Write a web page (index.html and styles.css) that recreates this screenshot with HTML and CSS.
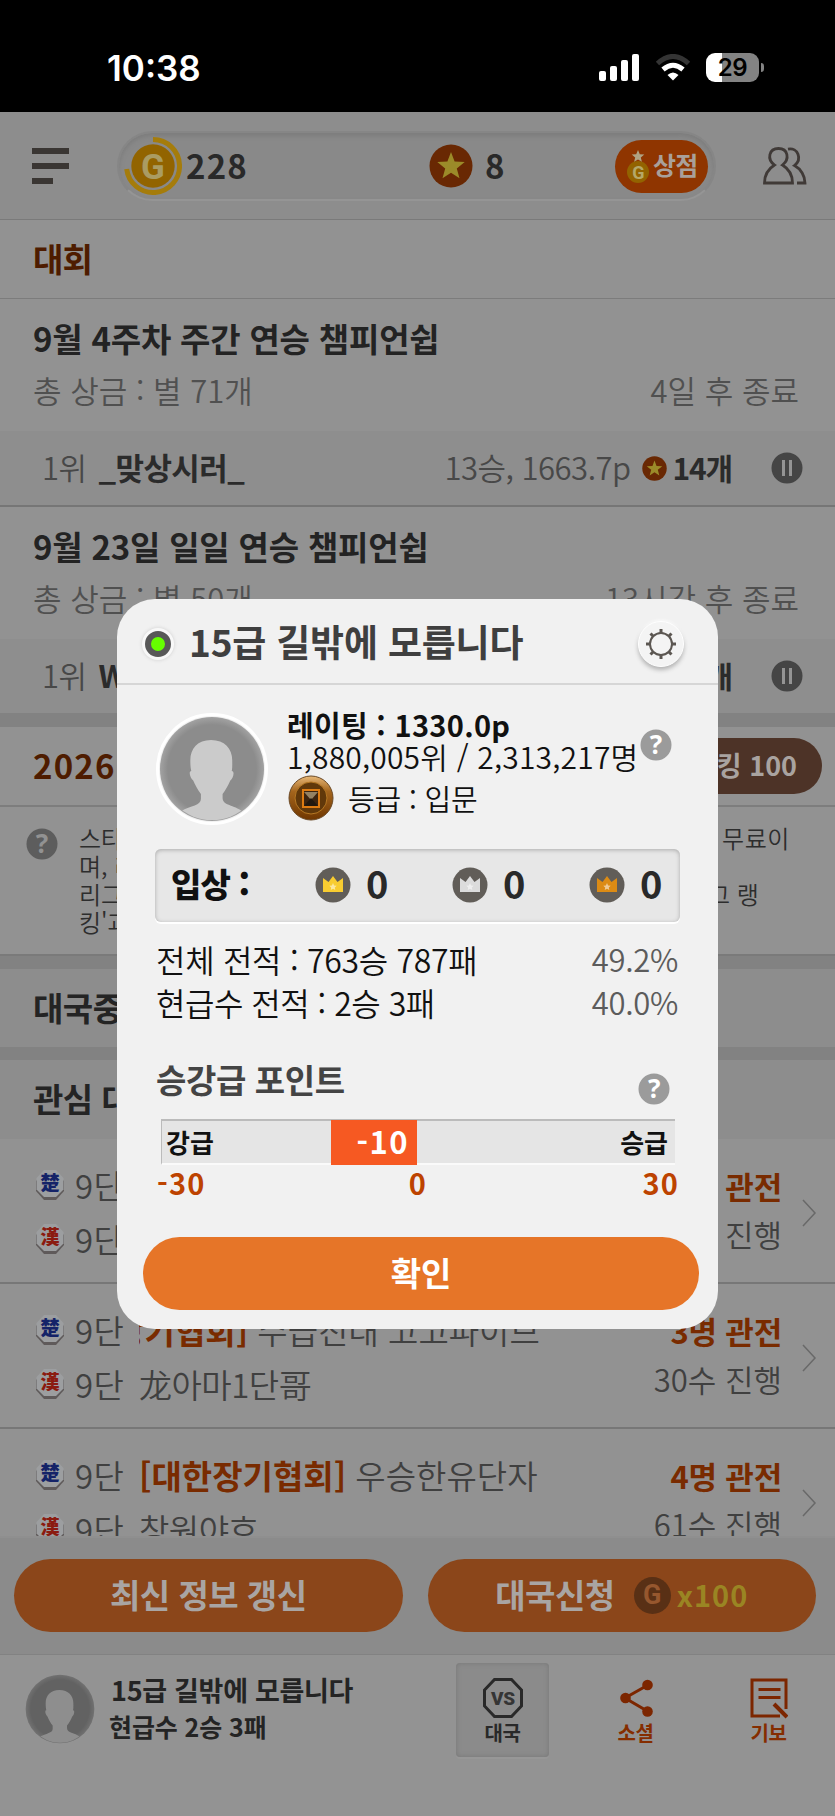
FILE: index.html
```html
<!DOCTYPE html>
<html lang="ko">
<head>
<meta charset="utf-8">
<title>장기</title>
<link rel="stylesheet" href="styles.css">
</head>
<body>
<svg class="defs" width="0" height="0" aria-hidden="true">
  <defs>
    <radialGradient id="avatarBg"><stop offset=".85" stop-color="#8c8c8c"/><stop offset="1" stop-color="#a2a2a2"/></radialGradient>
    <clipPath id="avatarClip"><circle cx="55" cy="55" r="53"/></clipPath>
    <linearGradient id="bronze" x1="0" y1="0" x2="0" y2="1"><stop offset="0" stop-color="#e8b877"/><stop offset=".35" stop-color="#a4651d"/><stop offset="1" stop-color="#6f3600"/></linearGradient>
    <symbol id="avatar" viewBox="0 0 110 110">
      <circle cx="55" cy="55" r="54" fill="url(#avatarBg)"/>
      <path clip-path="url(#avatarClip)" fill="#cbcbcb" d="M54 25c-14 0-21.500 9-21.500 21 0 5 .3 8 1 11-3 0-1.500 7 2 10 2 5 5 10 8 14v5c0 7-10 7-21 13v11h64V99C78 92 66 93 66 85v-4c3-4 6-9 8-14 3-2 5-10 1.500-10 .7-3 .5-7 .5-11 0-12-8-21-22-21z"/>
    </symbol>
    <symbol id="star" viewBox="0 0 44 44">
      <circle cx="22" cy="22" r="21.500" fill="#692803"/>
      <path fill="#9b8b29" d="M22 8l3.600 9.600 10.100.5-7.900 6.300 2.700 9.900-8.500-5.600-8.500 5.600 2.700-9.900-7.900-6.300 10.100-.5z"/>
    </symbol>
    <symbol id="pause" viewBox="0 0 32 32">
      <circle cx="16" cy="16" r="15.500" fill="#454545"/><path d="M12.500 8v16M19.500 8v16" stroke="#949494" stroke-width="3"/>
    </symbol>
    <symbol id="piece" viewBox="0 0 28 32">
      <path fill="#5f5a5a" d="M8 5h12l8 7v10l-8 9H8l-8-9V12z"/><path fill="#9c9ea0" d="M8 1h12l7.500 8v11.500L20 28H8L.5 20.500V9z"/>
    </symbol>
    <symbol id="crown" viewBox="0 0 36 36">
      <circle cx="18" cy="18" r="17.500" fill="#615d58"/>
      <path fill="currentColor" d="M8 11l5.500 4L18 9l4.500 6 5.500-4v14H8z"/><path fill="#fff" opacity=".55" d="M18 16l1.100 2.400 2.600.3-1.900 1.800.5 2.600-2.300-1.300-2.300 1.300.5-2.600-1.900-1.800 2.600-.3z"/>
    </symbol>
    <symbol id="chevron" viewBox="0 0 16 30"><path d="M2 2l12 13L2 28" fill="none" stroke="#696969" stroke-width="1.500"/></symbol>
  </defs>
</svg>

<div class="screen">
  <div class="status">
    <span class="clock">10:38</span>
    <div class="status-icons">
      <svg width="41" height="27" viewBox="0 0 41 27" fill="#fff"><rect x="0" y="17" width="7" height="10" rx="2"/><rect x="11" y="12" width="7" height="15" rx="2"/><rect x="22" y="6" width="7" height="21" rx="2"/><rect x="33" y="0" width="7" height="27" rx="2"/></svg>
      <svg width="36" height="27" viewBox="0 0 36 27" fill="none" stroke-width="5"><path d="M2.500 9.500Q18-4.500 33.500 9.500" stroke="#343434"/><path d="M8 15.500Q18 7 28 15.500" stroke="#fff"/><path d="M18 26.500l-5.500-5.500q5.500-5 11 0z" fill="#fff" stroke="none"/></svg>
      <span class="battery"><b>29</b></span>
    </div>
  </div>

  <div class="topbar">
    <svg width="38" height="36" viewBox="0 0 38 36" fill="#3a3633"><path d="M0 0h37v6H0zM0 15h37v6H0zM0 30h21v6H0z"/></svg>
    <div class="wallet">
      <svg class="coin" width="58" height="60" viewBox="0 0 58 60"><circle cx="29" cy="30" r="21.700" fill="#926400"/><path d="M29 3.500a26.500 26.500 0 1 1-26.300 29.500" fill="none" stroke="#a57c0b" stroke-width="5"/><text x="29" y="42.500" class="coin-letter">G</text></svg>
      <span class="gold">228</span>
      <svg class="wallet-star" width="44" height="44"><use href="#star"/></svg>
      <span class="stars">8</span>
      <div class="shop"><svg width="24" height="34" viewBox="0 0 24 34"><circle cx="12" cy="23" r="11" fill="#936300"/><text x="12" y="29.500" class="shop-letter">G</text><path fill="#b0a383" d="M12 1l1.800 4.200 4.500.3-3.500 2.900 1.100 4.400-3.900-2.400-3.900 2.400 1.100-4.400-3.500-2.900 4.500-.3z"/></svg><span>상점</span></div>
    </div>
    <svg class="friends" width="44" height="38" viewBox="0 0 44 38" fill="none" stroke="#403a37" stroke-width="2.800"><path d="M11.500 18C3.500 12 6 1.500 15.500 1.500S27 12 19.500 18C26 22 29.500 29 29.500 36H1.500c0-7 3.500-14 10-18z"/><path d="M25 2.200c10-2 14.500 10 6.500 16.300C38 22 42 29 42 36h-8"/></svg>
  </div>

  <div class="feed">
    <div class="heading"><span class="accent">대회</span></div>
    <div class="event">
      <div class="event-title">9월 4주차 주간 연승 챔피언쉽</div>
      <div class="event-meta"><span>총 상금 : 별 71개</span><span>4일 후 종료</span></div>
    </div>
    <div class="leader"><span class="rank">1위</span><b>_맞상시러_</b><span class="score">13승, 1663.7p</span><svg width="25" height="25"><use href="#star"/></svg><b class="prize">14개</b><svg width="32" height="32"><use href="#pause"/></svg></div>
    <div class="event second">
      <div class="event-title">9월 23일 일일 연승 챔피언쉽</div>
      <div class="event-meta"><span>총 상금 : 별 50개</span><span>13시간 후 종료</span></div>
    </div>
    <div class="leader last"><span class="rank">1위</span><b>W</b><span class="score"></span><b class="prize">개</b><svg width="32" height="32"><use href="#pause"/></svg></div>
    <div class="season"><span class="accent">2026</span><span class="ranking">랭킹 100</span></div>
    <div class="note"><svg width="32" height="32" viewBox="0 0 32 32"><circle cx="16" cy="16" r="15.500" fill="#5d5d5d"/><text x="16" y="25" class="qmark dim">?</text></svg>
      <div class="note-left">스타<br>며, 리<br>리그<br>킹'과</div><div class="note-right"><span>무료이</span><br><br>그 랭</div></div>
    <div class="section">대국중</div>
    <div class="section watch">관심 대국</div>
    <div class="game"><div class="player"><span class="piece cho"><svg><use href="#piece"/></svg><i>楚</i></span><span class="level">9단</span></div><div class="player"><span class="piece han"><svg><use href="#piece"/></svg><i>漢</i></span><span class="level">9단</span></div><div class="watchers"><b>관전</b><span>진행</span></div><svg class="go" width="16" height="30"><use href="#chevron"/></svg></div>
    <div class="game"><div class="player"><span class="piece cho"><svg><use href="#piece"/></svg><i>楚</i></span><span class="level">9단</span><span class="name"><span class="scrolled"><b>[대한장기협회]</b> 수급진대 고고파이브</span></span></div><div class="player"><span class="piece han"><svg><use href="#piece"/></svg><i>漢</i></span><span class="level">9단</span><span class="name tight">龙아마1단哥</span></div><div class="watchers"><b>3명 관전</b><span>30수 진행</span></div><svg class="go" width="16" height="30"><use href="#chevron"/></svg></div>
    <div class="game"><div class="player"><span class="piece cho"><svg><use href="#piece"/></svg><i>楚</i></span><span class="level">9단</span><span class="name"><b>[대한장기협회]</b> 우승한유단자</span></div><div class="player"><span class="piece han"><svg><use href="#piece"/></svg><i>漢</i></span><span class="level">9단</span><span class="name tight">창원야호</span></div><div class="watchers"><b>4명 관전</b><span>61수 진행</span></div><svg class="go" width="16" height="30"><use href="#chevron"/></svg></div>
  </div>

  <div class="actions">
    <div class="pill">최신 정보 갱신</div>
    <div class="pill">대국신청<span class="cost-coin">G</span><span class="cost">x100</span></div>
  </div>

  <div class="nav">
    <svg class="me" width="70" height="70"><use href="#avatar"/></svg>
    <div class="me-text"><div>15급 길밖에 모릅니다</div><div class="sub">현급수 2승 3패</div></div>
    <div class="tab active"><svg width="42" height="42" viewBox="0 0 42 42"><path d="M12.500 2.500h17l10 10.500v16l-10 10.500h-17L2.500 29V13z" fill="none" stroke="#292929" stroke-width="3"/><text x="21" y="27.500" class="vs">VS</text></svg><span>대국</span></div>
    <div class="tab"><svg width="36" height="40" viewBox="0 0 36 40" fill="#7c2600"><path d="M30 7L7 20l23 13.500" fill="none" stroke="#7c2600" stroke-width="3"/><circle cx="29.500" cy="7" r="5.300"/><circle cx="7.500" cy="20" r="5.300"/><circle cx="29.500" cy="33.500" r="5.300"/></svg><span>소셜</span></div>
    <div class="tab"><svg width="38" height="40" viewBox="0 0 38 40" fill="none" stroke="#7c2600" stroke-width="3"><path d="M36 31V2H2v36h28M8.500 11.500h22M8.500 19.500h22"/><path d="M24 26l13 13" stroke-width="4"/></svg><span>기보</span></div>
  </div>

  <div class="dialog">
    <div class="dialog-head"><i class="online"></i><span class="dialog-title">15급 길밖에 모릅니다</span>
      <span class="gear"><svg width="32" height="32" viewBox="0 0 32 32" fill="none" stroke="#5c5752"><circle cx="16" cy="16" r="11" stroke-width="2"/><path stroke-width="3" d="M16 1v4M16 27v4M1 16h4M27 16h4M5.500 5.500l2.500 2.500M24 24l2.500 2.500M5.500 26.500L8 24M24 8l2.500-2.500"/></svg></span></div>
    <div class="profile">
      <svg class="photo" width="112" height="112"><use href="#avatar"/></svg>
      <div class="facts">
        <div class="rating">레이팅 : 1330.0p</div>
        <div class="place">1,880,005위 / 2,313,217명</div>
        <div class="grade"><svg width="46" height="46" viewBox="0 0 46 46"><circle cx="23" cy="23" r="22" fill="url(#bronze)" stroke="#6b4a27"/><circle cx="23" cy="23" r="16" fill="#61380a" stroke="#b67824"/><path d="M15 15h16v17H15z" fill="#3b2410" stroke="#dc7b12" stroke-width="2"/><path d="M16 17h14l-7 8z" fill="#938163"/><path d="M16 31l7-8 7 8" fill="#21180f"/></svg><span>등급 : 입문</span></div>
      </div>
      <svg class="help" width="32" height="32" viewBox="0 0 32 32"><circle cx="16" cy="16" r="15.500" fill="#9b9b9b"/><text x="16" y="25" class="qmark">?</text></svg>
    </div>
    <div class="medals"><b>입상 :</b><span class="medal gold-m"><svg width="36" height="36"><use href="#crown"/></svg>0</span><span class="medal silver-m"><svg width="36" height="36"><use href="#crown"/></svg>0</span><span class="medal bronze-m"><svg width="36" height="36"><use href="#crown"/></svg>0</span></div>
    <div class="record"><span>전체 전적 : 763승 787패</span><em>49.2%</em></div>
    <div class="record next"><span>현급수 전적 : 2승 3패</span><em>40.0%</em></div>
    <div class="points"><span>승강급 포인트</span><svg width="32" height="32" viewBox="0 0 32 32"><circle cx="16" cy="16" r="15.500" fill="#9b9b9b"/><text x="16" y="25" class="qmark">?</text></svg></div>
    <div class="gauge"><span class="down">강급</span><span class="value">-10</span><span class="up">승급</span></div>
    <div class="scale"><span>-30</span><span>0</span><span>30</span></div>
    <div class="ok">확인</div>
  </div>
</div>
</body>
</html>
```
FILE: styles.css
```css
* { box-sizing: border-box; }
body { margin: 0; background: #929292; }
.defs { position: absolute; }
svg { display: block; flex: none; }
.screen { position: relative; width: 835px; height: 1816px; overflow: hidden; display: flex; flex-direction: column; font-family: "Noto Sans CJK KR", sans-serif; color: #222; background: #929292; white-space: nowrap; }
.status { height: 112px; flex: none; background: #000; display: flex; justify-content: space-between; padding: 0 76px 0 107px; color: #fff; }
.clock { font: 600 35px/40px Inter, sans-serif; margin-top: 48px; }
.status-icons { display: flex; align-items: center; gap: 15px; height: 30px; margin-top: 52px; }
.battery { position: relative; width: 53px; height: 29px; border-radius: 9px; background: linear-gradient(90deg, #fff 30%, #838383 30%); color: #000; text-align: center; font: 600 24px/29px Inter, sans-serif; }
.battery::after { content: ""; position: absolute; right: -5px; top: 10px; width: 3px; height: 9px; border-radius: 0 4px 4px 0; background: #838383; }
.battery b { font-weight: 600; letter-spacing: -.5px; }

.topbar { height: 108px; flex: none; display: flex; align-items: center; padding: 1px 28px 0 32px; background: #8d8d8d; border-bottom: 1px solid #7a7a7a; }
.wallet { width: 599px; height: 70px; margin-left: 47px; border-radius: 35px; background: #898989; border: 2px solid #868686; border-bottom-color: #959595; box-shadow: inset 0 3px 4px #7d7d7d; display: flex; align-items: center; }
.coin { margin-left: 5px; }
.coin-letter { font: 700 35px Roboto, sans-serif; fill: #aa9c63; text-anchor: middle; }
.gold, .stars { margin-top: -2px; font-size: 33px; font-weight: 700; line-height: 44px; letter-spacing: 1.200px; color: #292929; }
.gold { width: 183px; margin-left: 4px; }
.wallet .wallet-star { margin-left: 60px; }
.stars { margin-left: 12px; }
.shop { width: 93px; height: 53px; margin-left: auto; margin-right: 6px; border-radius: 27px; background: #8f3500; display: flex; align-items: center; padding-left: 11px; gap: 3px; font-size: 25px; line-height: 48px; font-weight: 700; color: #a9a09a; letter-spacing: -.8px; }
.shop span { margin-top: -4px; }
.shop-letter { font: 700 18px Roboto, sans-serif; fill: #b5a86a; text-anchor: middle; }
.friends { margin-left: auto; }

.feed { height: 1316px; flex: none; overflow: hidden; }
.heading { height: 79px; border-bottom: 1px solid #7c7c7c; padding: 15px 33px; font-size: 33px; line-height: 46px; font-weight: 700; letter-spacing: -.8px; }
.accent { color: #4e1c00; }
.event { height: 132px; padding: 16px 36px 0 33px; background: #929292; }
.event-title { font-size: 33px; line-height: 46px; font-weight: 700; letter-spacing: -.2px; color: #232323; }
.event-meta { display: flex; justify-content: space-between; margin-top: 7px; font-size: 31px; line-height: 44px; font-weight: 350; color: #505050; letter-spacing: 0; }
.leader { height: 76px; display: flex; align-items: center; padding: 0 32px 3px 42px; background: #8e8e8e; border-bottom: 2px solid #767676; font-size: 31px; font-weight: 350; letter-spacing: -.5px; color: #484848; }
.leader b { font-weight: 700; color: #2b2b2b; margin-left: 12px; letter-spacing: -.6px; }
.leader svg { margin-top: 3px; }
.score { margin-left: auto; margin-right: 11px; }
.leader .prize { margin: 0 39px 0 6px; font-size: 30px; letter-spacing: -1.200px; }
.leader.last { height: 74px; border: 0; }
.season { height: 94px; border-top: 14px solid #828282; border-bottom: 2px solid #7d7d7d; padding: 0 13px 1px 33px; display: flex; align-items: center; justify-content: space-between; font-size: 33px; line-height: 46px; font-weight: 700; letter-spacing: 1.200px; }
.ranking { height: 56px; width: 150px; border-radius: 28px; background: #4d3327; color: #a9a3a0; text-align: right; padding-right: 25px; line-height: 54px; font-size: 27px; letter-spacing: 0; }
.season .accent { margin-top: -1px; }
.note { height: 149px; display: flex; padding: 17px 26px 0 26px; font-size: 24px; line-height: 28px; color: #2d2d2d; font-weight: 350; border-bottom: 2px solid #7a7a7a; }
.note svg { margin-top: 4px; }
.note-left { margin-left: 21px; }
.note-right { margin-left: auto; width: 101px; }
.note-right span { margin-left: 14px; letter-spacing: .6px; }
.qmark { font: 700 26px "Noto Sans", sans-serif; fill: #fff; text-anchor: middle; }
.qmark.dim { fill: #929292; }
.section { height: 91px; border-top: 13px solid #828282; padding: 15px 33px; font-size: 33px; line-height: 46px; font-weight: 700; letter-spacing: -.5px; background: #8d8d8d; color: #242424; }
.section.watch { height: 92px; }
.game { position: relative; height: 145px; border-bottom: 2px solid #777; padding: 24px 0 0 36px; font-size: 33px; line-height: 44px; font-weight: 350; color: #404040; }
.player { height: 44px; display: flex; align-items: center; margin-bottom: 10px; }
.level { margin-left: 11px; width: 64px; letter-spacing: .5px; }
.name { width: 420px; overflow: hidden; }
.name.tight { letter-spacing: -.5px; }
.scrolled { margin-left: -98px; }
.piece { position: relative; width: 28px; height: 32px; flex: none; }
.piece svg { width: 28px; height: 32px; }
.piece i { position: absolute; left: 0; top: -1px; width: 28px; text-align: center; font: 900 19px/28px "Noto Sans CJK TC", sans-serif; }
.cho i { color: #142368; }
.han i { color: #8b1b10; }
.game b { color: #792b00; font-weight: 700; }
.watchers { position: absolute; right: 53px; top: 25px; display: flex; flex-direction: column; gap: 4px; text-align: right; font-size: 31px; }
.watchers b { line-height: 44px; letter-spacing: -.2px; }
.go { position: absolute; right: 18px; top: 59px; }

.actions { height: 119px; flex: none; display: flex; gap: 25px; padding: 21px 19px 0 14px; background: #8b8b8b; border-top: 2px solid #8f8f8f; border-bottom: 1px solid #828282; }
.pill { flex: 1; height: 73px; padding-bottom: 3px; border-radius: 37px; background: #8b461a; color: #a9a5a3; display: flex; align-items: center; justify-content: center; font-size: 33px; font-weight: 700; letter-spacing: -.5px; }
.cost-coin { width: 37px; height: 37px; margin: 2px 0 0 19px; border-radius: 50%; background: #593015; color: #96572e; text-align: center; font: 700 27px/37px Roboto, sans-serif; letter-spacing: 0; }
.cost { margin-left: 6px; color: #9a8523; font-size: 29px; letter-spacing: 1px; }
.nav { flex: 1; display: flex; padding-left: 25px; background: #939393; }
.me { margin-top: 19px; filter: brightness(.7); }
.me-text { width: 345px; margin-left: 16px; padding-top: 15px; font-size: 27px; line-height: 39px; font-weight: 700; color: #242424; letter-spacing: -.3px; }
.me-text .sub { margin-left: -2px; font-size: 25px; line-height: 35px; letter-spacing: -.1px; }
.tab { width: 93px; height: 94px; margin-top: 8px; padding-top: 14px; display: flex; flex-direction: column; align-items: center; font-size: 20px; line-height: 28px; font-weight: 700; color: #852d00; letter-spacing: -.3px; }
.tab + .tab { margin-left: 40px; }
.tab svg { height: 42px; }
.tab span { margin-top: 0; }
.tab.active { color: #292929; border-radius: 4px; background: #8b8b8b; box-shadow: inset 0 0 5px #777, 0 2px #979797; }
.vs { font: 900 19px Roboto, sans-serif; fill: #353535; text-anchor: middle; }

.dialog { position: absolute; left: 117px; top: 599px; width: 601px; height: 730px; border-radius: 38px; background: #f1f1f1; color: #111; }
.dialog-head { height: 86px; border-bottom: 2px solid #d6d6d6; display: flex; align-items: center; padding: 5px 34px 0 28px; }
.online { width: 26px; height: 26px; border: 6px solid #585858; border-radius: 50%; background: #6f0; box-shadow: 0 0 0 3px #f8f8f8, 0 0 3px 4px #ddd; }
.dialog-title { margin: -6px 0 0 18px; font-size: 37px; font-weight: 700; letter-spacing: -.2px; color: #3f3f3f; }
.gear { margin-left: auto; width: 46px; height: 46px; display: flex; align-items: center; justify-content: center; border-radius: 50%; background: #f4f4f4; border: 1px solid #fff; box-shadow: 0 3px 4px #b4b4b4, 0 -1px 3px #fff; }
.profile { display: flex; padding: 28px 47px 0 39px; height: 164px; }
.photo { border: 3px solid #fff; border-radius: 50%; }
.facts { width: 352px; flex: none; margin: -5px 0 0 19px; }
.rating { font-size: 29px; line-height: 33px; font-weight: 700; letter-spacing: .3px; }
.place { font-size: 30px; line-height: 31px; font-weight: 350; letter-spacing: .2px; }
.grade { display: flex; align-items: center; gap: 14px; margin: 3px 0 0 1px; font-size: 29px; line-height: 46px; font-weight: 350; letter-spacing: -.2px; }
.help { margin-left: 1px; margin-top: 16px; }
.medals { margin: 0 38px; height: 73px; border-radius: 6px; background: #e7e7e7; box-shadow: inset 0 1px 4px #aaa, 0 2px #fff; display: flex; align-items: center; font-size: 33px; font-weight: 700; padding: 0 0 5px 16px; letter-spacing: -.8px; }
.medals svg { margin-top: 3px; }
.medals b { width: 144px; flex: none; }
.medal { display: flex; flex: none; align-items: center; gap: 15px; width: 137px; font-size: 38px; color: #292929; line-height: 40px; }
.bronze-m { width: auto; }
.gold-m svg { color: #f8cc30; } .silver-m svg { color: #dcdcdc; } .bronze-m svg { color: #dc8b14; }
.record { display: flex; justify-content: space-between; padding: 0 40px 0 39px; margin-top: 15px; font-size: 32px; line-height: 44px; font-weight: 350; letter-spacing: -.3px; }
.record.next { margin-top: -1px; }
.record.next span { letter-spacing: -.5px; }
.record em { font-style: normal; font-size: 31px; font-weight: 350; color: #5c5c5c; }
.points { display: flex; justify-content: space-between; align-items: flex-end; padding: 0 48px 0 39px; height: 56px; margin-top: 25px; font-size: 33px; line-height: 46px; font-weight: 700; color: #444; letter-spacing: -.4px; }
.points span { margin-bottom: 3px; }
.gauge { margin: 14px 43px 0 44px; height: 46px; background: #e5e5e5; border-top: 2px solid #bbb; border-left: 1px solid #bbb; border-bottom: 2px solid #fafafa; display: flex; align-items: center; padding: 0 7px 0 4px; font-size: 26px; line-height: 42px; font-weight: 700; letter-spacing: 0; }
.down { width: 165px; }
.value { width: 86px; height: 45px; padding-right: 8px; background: #f65922; color: #fff; text-align: right; font-size: 31px; line-height: 41px; letter-spacing: 1.500px; }
.up { margin-left: auto; }
.scale { display: grid; grid-template-columns: 1fr 40px 1fr; padding: 0 39px 0 40px; font-size: 29px; line-height: 35px; font-weight: 700; letter-spacing: 1.200px; color: #bd4300; text-align: center; }
.scale span:first-child { text-align: left; }
.scale span:last-child { text-align: right; }
.ok { position: absolute; left: 26px; top: 638px; width: 556px; height: 73px; border-radius: 37px; background: #e67528; color: #fff; text-align: center; font-size: 33px; line-height: 70px; font-weight: 700; }
```
